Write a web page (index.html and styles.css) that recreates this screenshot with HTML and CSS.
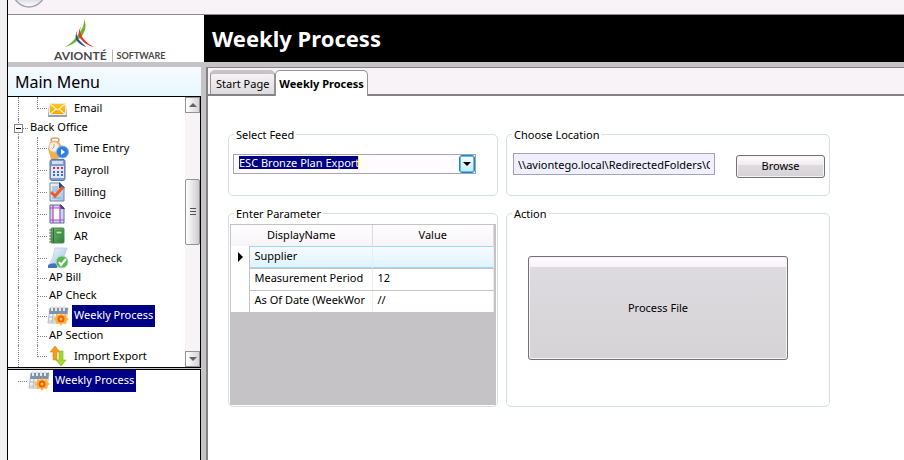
FILE: index.html
```html
<!DOCTYPE html>
<html lang="en">
<head>
  <meta charset="UTF-8">
  <meta name="viewport" content="width=device-width, initial-scale=1.0">
  <title>Weekly Process</title>
  <link rel="stylesheet" href="styles.css">
</head>
<body>

  <!-- shared icons -->
  <svg class="defs" width="0" height="0" aria-hidden="true">
    <defs>
      <linearGradient id="g-orb" x1="0" y1="0" x2="0" y2="1">
        <stop offset="0.6" stop-color="#c4c6d4"/><stop offset="1" stop-color="#ffffff"/>
      </linearGradient>
      <linearGradient id="g-blue" x1="0" y1="0" x2="1" y2="1">
        <stop offset="0" stop-color="#f4faff"/><stop offset="1" stop-color="#9cbfe2"/>
      </linearGradient>
      <linearGradient id="g-gold" x1="0" y1="0" x2="0" y2="1">
        <stop offset="0" stop-color="#ffc520"/><stop offset="1" stop-color="#f7a800"/>
      </linearGradient>
      <linearGradient id="g-green" x1="0" y1="0" x2="1" y2="1">
        <stop offset="0" stop-color="#78c070"/><stop offset="1" stop-color="#2c7c34"/>
      </linearGradient>
    </defs>
    <symbol id="i-mail" viewBox="0 0 22 22">
      <path d="M2 8h17l1 12H1z" fill="#9aa0a6"/>
      <path d="M2 6h17v12H2z" fill="#e8eaec"/>
      <path d="M3 7h15v10H3z" fill="url(#g-gold)"/>
      <path d="M3 7l7.500 6L18 7M3 17l6-5M18 17l-6-5" fill="none" stroke="#fff3c0" stroke-width="1.200"/>
    </symbol>
    <symbol id="i-time" viewBox="0 0 22 22">
      <ellipse cx="8" cy="3" rx="4" ry="2" fill="none" stroke="#c9a070" stroke-width="1.500"/>
      <path d="M3 5q5-3 9 0l4 6-1 8-4 3H4L1 12z" fill="#f5b04a"/>
      <circle cx="7" cy="10" r="5" fill="#f4efe6" stroke="#e0cfae"/>
      <path d="M7 7v3l-2 2" fill="none" stroke="#b9a98c"/>
      <circle cx="15.500" cy="15" r="6" fill="#2d7fe0" stroke="#7fb2ec"/>
      <path d="M14 12l4 3-4 3z" fill="#fff"/>
    </symbol>
    <symbol id="i-calc" viewBox="0 0 22 22">
      <rect x="3" y="0.500" width="15" height="21" rx="2" fill="#7f9cc8" stroke="#5d77a4"/>
      <rect x="5" y="2" width="11" height="3" fill="#cfe0f6"/>
      <rect x="4" y="7" width="13" height="12" fill="#dfe8f4"/>
      <path d="M6 9h2M10 9h2M14 9h2" stroke="#d03040" stroke-width="2"/>
      <path d="M6 13h2M10 13h2M14 13h2M6 16h2M10 16h2M14 16h2" stroke="#4668b8" stroke-width="2"/>
    </symbol>
    <symbol id="i-bill" viewBox="0 0 22 22">
      <path d="M3 2h10l4 4v14H3z" fill="url(#g-blue)" stroke="#7088aa"/>
      <path d="M12 1l6 6h-6z" fill="#2f4a78"/>
      <path d="M5 6h6M5 8h7M5 10h9M5 17h9" stroke="#8aa6c8"/>
      <path d="M4 11l4 4 8-9" fill="none" stroke="#ef5a28" stroke-width="3"/>
    </symbol>
    <symbol id="i-invoice" viewBox="0 0 22 22">
      <path d="M3 2h11l3 3v15H3z" fill="#c9daf0" stroke="#5b6f94"/>
      <path d="M13 1l5 5h-5z" fill="#2f4470"/>
      <path d="M6 5h7v12H6z" fill="#ffffff"/>
      <path d="M6 2v18M13 2v18M3 5h12M3 17h14" stroke="#c43cc8" stroke-width="1.200"/>
    </symbol>
    <symbol id="i-book" viewBox="0 0 22 22">
      <rect x="4" y="3" width="13" height="15" rx="1" fill="url(#g-green)" stroke="#4b8a50"/>
      <path d="M6.500 3v15" stroke="#286c30"/>
      <rect x="9" y="6" width="6" height="3" fill="#bfe6b4" stroke="#3a8440"/>
      <path d="M2 5h4M2 8h4M2 11h4M2 14h4M2 17h4" stroke="#667066"/>
    </symbol>
    <symbol id="i-check" viewBox="0 0 22 22">
      <path d="M8 1h12l-4 11 1 8H1Q7 11 8 1z" fill="url(#g-blue)" stroke="#bcd2e6"/>
      <path d="M1 18q5-3 9-1v4H1z" fill="#3f78b4"/>
      <circle cx="15" cy="15" r="6" fill="#5cb65c" stroke="#a9d8a4"/>
      <path d="M12 15l2 3 5-6" fill="none" stroke="#fff" stroke-width="2"/>
    </symbol>
    <symbol id="i-week" viewBox="0 0 22 22">
      <path d="M3 3h18l-2 15H1z" fill="#eef1f5" stroke="#b4bcc8"/>
      <path d="M3 3h18l-1 6H2z" fill="#8391a6"/>
      <path d="M5 1v5M9 1v5M13 1v5M17 1v5" stroke="#e4e8ee" stroke-width="2"/>
      <path d="M2 12h17M2 16h17M6 9l-1 9M10 9v9" stroke="#b4bdca"/>
      <path d="M14 8l2 2 3-1v3l3 2-3 2v3l-3-1-2 3-2-3-3 1v-3l-3-2 3-2V9l3 1z" fill="#fdb62c"/>
      <circle cx="14" cy="14" r="2.500" fill="#ffd23c" stroke="#f4581c" stroke-width="2"/>
    </symbol>
    <symbol id="i-swap" viewBox="0 0 22 22">
      <path d="M8 1l5 6h-3v8H6V7H3z" fill="#f59a1c" stroke="#e08c20" stroke-width="0.600"/>
      <path d="M14 21l-5-6h3V6h4v9h3z" fill="#a4d82c" stroke="#7cb41c" stroke-width="0.600"/>
    </symbol>
  </svg>

  <div class="window">
    <div class="topbar">
      <svg class="orb" width="34" height="9" viewBox="0 0 34 9" aria-hidden="true">
        <circle cx="17" cy="-9" r="16" fill="url(#g-orb)" stroke="#a4a4b0" stroke-width="1.500"/>
      </svg>
    </div>

    <header class="banner">
      <div class="logo">
        <svg class="logo-mark" width="34" height="34" viewBox="0 0 34 34" aria-hidden="true">
          <path d="M22 0Q26 13 16 22Q9 29 0 31Q9 26 14 18Q21 11 22 0z" fill="#6cb52d"/>
          <path d="M18 8Q15 16 22 23Q26 28 33 31Q23 29 18 22Q13 17 18 8z" fill="#ee2e24"/>
          <path d="M14 13Q12 20 17 24Q20 27 24 31Q16 28 13 23Q11 19 14 13z" fill="#2c4a9c"/>
        </svg>
        <div class="logo-text">
          <span class="logo-name">AVIONTÉ</span>
          <span class="logo-sub">SOFTWARE</span>
        </div>
      </div>
      <h1>Weekly Process</h1>
    </header>

    <div class="main">
      <aside class="sidebar">
        <h2>Main Menu</h2>
        <nav class="tree-box">
          <ul class="tree">
            <li class="row"><span class="trunk"></span><span class="branch end"></span><svg class="icon"><use href="#i-mail"/></svg><span class="label">Email</span></li>
            <li class="row plain parent"><span class="trunk"></span><button class="toggle" aria-label="Collapse Back Office"></button><span class="stub"></span><span class="label">Back Office</span></li>
            <li class="row"><span class="trunk"></span><span class="branch"></span><svg class="icon"><use href="#i-time"/></svg><span class="label">Time Entry</span></li>
            <li class="row"><span class="trunk"></span><span class="branch"></span><svg class="icon"><use href="#i-calc"/></svg><span class="label">Payroll</span></li>
            <li class="row"><span class="trunk"></span><span class="branch"></span><svg class="icon"><use href="#i-bill"/></svg><span class="label">Billing</span></li>
            <li class="row"><span class="trunk"></span><span class="branch"></span><svg class="icon"><use href="#i-invoice"/></svg><span class="label">Invoice</span></li>
            <li class="row"><span class="trunk"></span><span class="branch"></span><svg class="icon"><use href="#i-book"/></svg><span class="label">AR</span></li>
            <li class="row"><span class="trunk"></span><span class="branch"></span><svg class="icon"><use href="#i-check"/></svg><span class="label">Paycheck</span></li>
            <li class="row plain"><span class="trunk"></span><span class="branch"></span><span class="label">AP Bill</span></li>
            <li class="row plain"><span class="trunk"></span><span class="branch"></span><span class="label">AP Check</span></li>
            <li class="row selected"><span class="trunk"></span><span class="branch"></span><svg class="icon"><use href="#i-week"/></svg><span class="label">Weekly Process</span></li>
            <li class="row plain"><span class="trunk"></span><span class="branch"></span><span class="label">AP Section</span></li>
            <li class="row"><span class="trunk"></span><span class="branch end"></span><svg class="icon"><use href="#i-swap"/></svg><span class="label">Import Export</span></li>
          </ul>
          <div class="scrollbar">
            <button class="scroll-btn up" aria-label="Scroll up"></button>
            <div class="track"><div class="thumb"></div></div>
            <button class="scroll-btn down" aria-label="Scroll down"></button>
          </div>
        </nav>
        <nav class="recent">
          <ul class="tree">
            <li class="row selected"><span class="stub"></span><svg class="icon"><use href="#i-week"/></svg><span class="label">Weekly Process</span></li>
          </ul>
        </nav>
      </aside>

      <main class="content">
        <div class="tabs" role="tablist">
          <button class="tab" role="tab">Start Page</button>
          <button class="tab active" role="tab" aria-selected="true">Weekly Process</button>
        </div>

        <form class="page">
          <fieldset>
            <legend><label for="feed">Select Feed</label></legend>
            <div class="combo">
              <select id="feed">
                <option>ESC Bronze Plan Export</option>
              </select>
              <span class="combo-arrow"></span>
            </div>
          </fieldset>

          <fieldset>
            <legend><label for="location">Choose Location</label></legend>
            <div class="location">
              <input type="text" id="location" value="\\aviontego.local\RedirectedFolders\C">
              <button type="button" class="btn">Browse</button>
            </div>
          </fieldset>

          <fieldset class="tall">
            <legend>Enter Parameter</legend>
            <div class="grid-box">
              <table class="grid">
                <colgroup><col class="col-mark"><col class="col-name"><col></colgroup>
                <thead>
                  <tr><th colspan="2">DisplayName</th><th>Value</th></tr>
                </thead>
                <tbody>
                  <tr class="current"><td class="mark"><span class="pointer"></span></td><td>Supplier</td><td></td></tr>
                  <tr><td class="mark"></td><td>Measurement Period</td><td>12</td></tr>
                  <tr><td class="mark"></td><td>As Of Date (WeekWor</td><td>//</td></tr>
                </tbody>
              </table>
            </div>
          </fieldset>

          <fieldset class="tall">
            <legend>Action</legend>
            <div class="action">
              <button type="button" class="btn btn-big">Process File</button>
            </div>
          </fieldset>
        </form>
      </main>
    </div>
  </div>

</body>
</html>
```

FILE: styles.css
```css
* {
  box-sizing: border-box;
}

body {
  margin: 0;
  background: #f0f0f0;
  color: #000;
  font-family: "Noto Sans", "Open Sans", sans-serif;
  font-size: 11px;
  line-height: 15px;
}

button, input, select {
  font: inherit;
  color: inherit;
}

ul {
  list-style: none;
  margin: 0;
  padding: 0;
}

.defs {
  position: absolute;
}

.window {
  display: flex;
  flex-direction: column;
  height: 100vh;
  margin-left: 7px;
  border-left: 1px solid #000;
  background: #c6c3c6;
}

.topbar {
  flex: none;
  height: 14px;
  padding-left: 4px;
  background: #f7f3f7;
}

.orb {
  display: block;
}

/* banner */

.banner {
  display: flex;
  flex: none;
  height: 48px;
  border-top: 1px solid #8c8a8c;
  background: #000;
}

.logo {
  width: 196px;
  padding: 4px 0 0 46px;
  background: #fff;
  color: #4a494a;
  font-family: Lato, sans-serif;
  font-weight: bold;
}

.logo-mark {
  display: block;
  height: 31px;
  margin-left: 9px;
}

.logo-text {
  display: flex;
  align-items: center;
  line-height: 12px;
}

.logo-name {
  font-size: 12px;
}

.logo-sub {
  margin-left: 5px;
  padding-left: 4px;
  border-left: 1px solid #b5b2b5;
  font-size: 9px;
}

h1 {
  margin: 0;
  padding-left: 8px;
  color: #fff;
  font-size: 22px;
  line-height: 46px;
}

/* sidebar */

.main {
  display: flex;
  flex: 1;
  min-height: 0;
  padding-top: 5px;
}

.sidebar {
  display: flex;
  flex-direction: column;
  flex: none;
  width: 193px;
  margin-right: 5px;
}

h2 {
  margin: 0;
  padding: 1px 0 0 7px;
  background: linear-gradient(#f7fbff, #e7f7ff);
  font-size: 16px;
  font-weight: normal;
  line-height: 28px;
}

.tree-box {
  display: flex;
  flex: none;
  border: 1px solid #000;
  border-left: 0;
  background: #fff;
}

.tree {
  flex: 1;
}

.row {
  display: flex;
  align-items: center;
  height: 22px;
  padding-left: 10px;
}

.row.plain {
  height: 18px;
}

.trunk {
  align-self: stretch;
  width: 19px;
  border-left: 1px dotted #848284;
}

.branch {
  align-self: stretch;
  width: 10px;
  border-left: 1px dotted #848284;
  background: repeating-linear-gradient(90deg, #848284 0 1px, transparent 1px 2px) 0 50% / 100% 1px no-repeat;
}

.branch.end {
  align-self: flex-start;
  height: 12px;
  background-position: 0 100%;
}

.stub {
  width: 10px;
  height: 1px;
  background: repeating-linear-gradient(90deg, #848284 0 1px, transparent 1px 2px);
}

.parent .trunk {
  width: 5px;
  margin-right: -9px;
}

.parent .stub {
  width: 5px;
}

.toggle {
  width: 9px;
  height: 9px;
  padding: 0;
  border: 1px solid #848284;
  background: linear-gradient(#000, #000) 50% 50% / 5px 1px no-repeat #fff;
}

.icon {
  flex: none;
  width: 22px;
  height: 22px;
  margin-right: 3px;
}

.label {
  padding: 0 2px 2px;
  white-space: nowrap;
}

.plain .label {
  padding-bottom: 3px;
}

.selected .label {
  background: #000084;
  color: #fff;
  line-height: 20px;
}

.scrollbar {
  display: flex;
  flex-direction: column;
  width: 15px;
  background: #f7f3f7;
}

.scroll-btn {
  height: 16px;
  padding: 0;
  border: 1px solid #949294;
  background: linear-gradient(90deg, #fff, #d6d3d6);
}

.scroll-btn::before {
  content: "";
  display: block;
  width: 0;
  margin: 0 auto;
  border: 4px solid transparent;
}

.scroll-btn.up::before {
  border-top: 0;
  border-bottom-color: #636163;
}

.scroll-btn.down::before {
  border-bottom: 0;
  border-top-color: #636163;
}

.track {
  flex: 1;
  padding-top: 66px;
}

.thumb {
  height: 66px;
  border: 1px solid #949294;
  border-radius: 2px;
  background:
    repeating-linear-gradient(#525152 0 1px, transparent 1px 3px) 50% 50% / 6px 9px no-repeat,
    linear-gradient(90deg, #fff, #ceccd2);
}

.recent {
  flex: 1;
  margin-top: 1px;
  border: 1px solid #000;
  border-width: 1px 1px 0 0;
  background: #fff;
}

/* tabs */

.content {
  display: flex;
  flex-direction: column;
  flex: 1;
  min-width: 0;
  border: 1px solid #848284;
  border-width: 1px 0 0 2px;
  background: #fff;
}

.tabs {
  display: flex;
  align-items: flex-end;
  height: 28px;
  padding: 2px 0 0 2px;
  border-bottom: 2px solid #848284;
  background: #f7f3f7;
}

.tab {
  height: 24px;
  padding: 0 5px 2px;
  border: 1px solid #949294;
  border-top: 4px solid #c6c3c6;
  border-bottom: 0;
  border-radius: 5px 5px 0 0;
  background: linear-gradient(#f7f3f7, #dedbde);
}

.tab.active {
  height: 26px;
  margin-bottom: -2px;
  padding: 0 3px;
  border: 1px solid #949294;
  border-bottom: 0;
  background: #fff;
  font-weight: bold;
}

/* form */

.page {
  display: grid;
  grid-template-columns: minmax(0, 270px) minmax(0, 324px);
  align-content: start;
  gap: 10px 8px;
  padding: 31px 20px;
}

fieldset {
  min-width: 0;
  min-height: 69px;
  margin: 0;
  padding: 0;
  border: 1px solid #d6dfe7;
  border-radius: 5px;
}

fieldset.tall {
  min-height: 201px;
}

legend {
  margin-left: 5px;
  padding: 0 2px;
}

.combo {
  position: relative;
  margin: 12px 21px 0 4px;
}

.combo select {
  display: block;
  width: 100%;
  height: 20px;
  padding: 0 20px 3px 5px;
  border: 1px solid #a5a2b5;
  border-radius: 0;
  appearance: none;
  /* highlighted value with the text cursor after it */
  background:
    linear-gradient(#000084, #000084) 5px 1px / 119px 13px no-repeat,
    linear-gradient(#ff0, #ff0) 124px 1px / 1px 13px no-repeat,
    #fffbff;
  color: #fff;
}

.combo-arrow {
  position: absolute;
  top: 1px;
  right: 1px;
  width: 16px;
  height: 18px;
  border: 1px solid #2186b5;
  border-radius: 3px;
  background: linear-gradient(#fff, #c6e7f7);
  box-shadow: inset 0 0 0 1px #4ac7f7;
  pointer-events: none;
}

.combo-arrow::before {
  content: "";
  position: absolute;
  top: 6px;
  left: 3px;
  border: 4px solid transparent;
  border-top-color: #000;
  border-bottom: 0;
}

.location {
  display: flex;
  align-items: flex-start;
  justify-content: space-between;
  padding: 11px 4px 0 6px;
}

.location input {
  width: 202px;
  height: 22px;
  padding: 0 4px;
  border: 1px solid #a5a2bd;
  background: #efefff;
}

.btn {
  width: 89px;
  height: 23px;
  margin-top: 2px;
  padding: 0 0 2px;
  border: 1px solid #737173;
  border-radius: 3px;
  background: linear-gradient(#fffbff, #efebef 45%, #dedbde 45%, #d6d3d6);
  box-shadow: inset 0 0 0 1px #f7f3f7;
}

.action {
  padding: 35px 41px 0 21px;
}

.btn-big {
  width: 100%;
  height: 104px;
  margin: 0;
  background: linear-gradient(#fffbff, #f7f3f7 10px, #dedbe0 10px, #d6d3d6);
}

/* parameter grid */

.grid-box {
  height: 181px;
  margin: 3px 1px 0;
  padding-right: 1px;
  border: 1px solid #c6c3c6;
  background: #c6c3c6;
}

.grid {
  width: 100%;
  border-collapse: collapse;
  table-layout: fixed;
}

.col-mark {
  width: 18px;
}

.col-name {
  width: 123px;
}

.grid th {
  height: 21px;
  padding: 0 0 2px;
  border-right: 1px solid #dedbde;
  background: linear-gradient(#fff, #f7f3f7);
  font-weight: normal;
}

.grid td {
  height: 22px;
  padding: 0 0 4px 5px;
  border: 1px solid #c6c3c6;
  border-right-color: #efebef;
  background: #fff;
  white-space: nowrap;
  overflow: hidden;
}

.grid td.mark {
  padding: 0 0 0 7px;
  border: 0;
}

.grid .current td:not(.mark) {
  border-top-color: #9cdbf7;
  background: linear-gradient(#f7fbff, #def3ff);
  box-shadow: inset 0 -1px #9cdbf7;
}

.pointer {
  display: block;
  width: 0;
  border: 5px solid transparent;
  border-left-color: #000;
  border-right: 0;
}
```
